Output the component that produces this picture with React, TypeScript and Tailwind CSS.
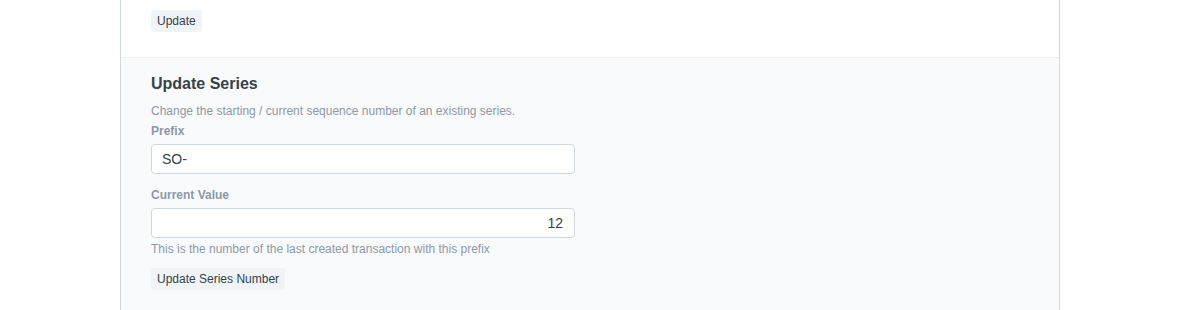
export default function App() {
  return (
    <div
      className="h-[310px] w-[1179px] overflow-hidden bg-white text-[#36414c]"
      style={{ fontFamily: '"Liberation Sans", Arial, sans-serif' }}
    >
      <div className="ml-[120px] flex h-full w-[940px] flex-col border-x border-[#d1d8dd]">
        <div className="flex border-b border-[#ebeef0] bg-white px-[30px] pt-[10px] pb-[25px]">
          <button className="block h-[22px] rounded-[3px] bg-[#f0f4f7] px-[6px] text-[12px] leading-[22px] text-[#36414c]">
            Update
          </button>
        </div>

        <div className="flex-1 bg-[#f9fafb] px-[30px] pt-[15px]">
          <h4 className="text-[16px] leading-[22px] font-bold text-[#36414c]">Update Series</h4>
          <p className="mt-[7px] text-[12px] leading-[18px] text-[#8d99a6]">
            Change the starting / current sequence number of an existing series.
          </p>

          <label className="mt-[2px] block text-[12px] leading-[18px] font-bold text-[#8d99a6]">Prefix</label>
          <div className="mt-[4px] flex h-[30px] w-[424px] items-center rounded-[4px] border border-[#d1d8dd] bg-white px-[10px] text-[14px] text-[#36414c]">
            SO-
          </div>

          <label className="mt-[12px] block text-[12px] leading-[18px] font-bold text-[#8d99a6]">
            Current Value
          </label>
          <div className="mt-[4px] flex h-[30px] w-[424px] items-center justify-end rounded-[4px] border border-[#d1d8dd] bg-white px-[11px] text-[14px] text-[#36414c]">
            12
          </div>
          <p className="mt-[2px] text-[12px] leading-[18px] text-[#8d99a6]">
            This is the number of the last created transaction with this prefix
          </p>

          <button className="mt-[10px] block h-[22px] rounded-[3px] bg-[#f0f4f7] px-[6px] text-[12px] leading-[22px] text-[#36414c]">
            Update Series Number
          </button>
        </div>
      </div>
    </div>
  );
}
